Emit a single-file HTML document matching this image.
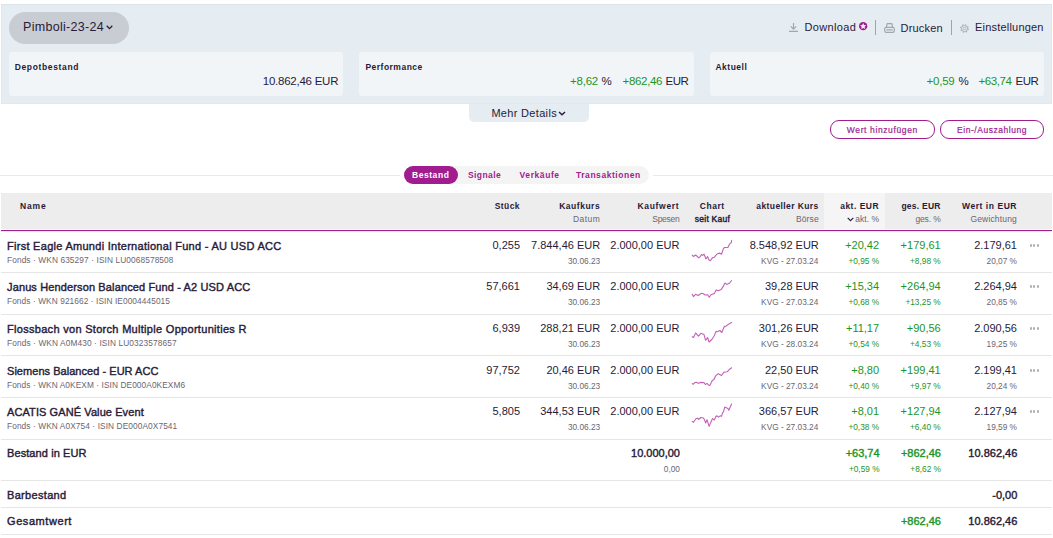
<!DOCTYPE html>
<html lang="de">
<head>
<meta charset="utf-8">
<title>Depot – Pimboli-23-24</title>
<style>
html,body{margin:0;padding:0;background:#fff;}
body{width:1053px;height:538px;position:relative;overflow:hidden;font-family:"Liberation Sans", Arial, sans-serif;color:#281a38;}
.t{position:absolute;white-space:nowrap;line-height:1;}
.m{-webkit-text-stroke:0.4px currentColor;}
.m2{-webkit-text-stroke:0.2px currentColor;}
.abs{position:absolute;}
.topbar{left:1px;top:4px;width:1051px;height:100px;background:#e5ecf2;box-shadow:inset 0 1px 0 #dde4e9,inset 1px 0 0 #e1e8ed,inset -1px 0 0 #e1e8ed,inset 0 -1px 0 #e2e9ee;}
.pill{left:9px;top:12px;width:120px;height:32px;border-radius:16px;background:#c8cdd3;}
.card{top:52px;height:44px;width:334px;background:#f2f5f8;border-radius:3px;}
.more{left:469px;top:104px;width:120px;height:18px;background:#e5ecf2;border-radius:0 0 5px 5px;}
.obtn{top:120px;height:17px;width:103px;border:1px solid #a01c8f;border-radius:9px;background:#fff;}
.hline{left:0;top:175px;width:1053px;height:1px;background:#e9e9e9;}
.tabswrap{left:400px;top:166px;width:253px;height:18px;background:#fff;}
.tabs{left:404px;top:166px;width:245px;height:18px;border-radius:9px;background:#f4f4f4;}
.tabon{left:404px;top:166px;width:54px;height:18px;border-radius:9px;background:#a01c8f;}
.thead{left:1px;top:193px;width:1051px;height:36px;background:#ededed;}
.thsort{left:824px;top:193px;width:61px;height:36px;background:#f5f5f5;}
.thline{left:1px;top:230px;width:1051px;height:1px;background:#a01c8f;box-shadow:0 1px 0 rgba(160,28,143,0.12);}
.sep{position:absolute;left:1px;width:1051px;height:1px;background:#e6e6e6;}
.spark{position:absolute;overflow:visible;}
.spark polyline{fill:none;stroke:#c462ba;stroke-width:1.12;stroke-linejoin:round;stroke-linecap:round;}
.dots{position:absolute;left:1029.8px;width:10px;height:3px;}
.dots i{position:absolute;top:0;width:2.1px;height:2.7px;border-radius:1px;background:#adb0b5;}
.dots i:nth-child(1){left:0}.dots i:nth-child(2){left:3.6px}.dots i:nth-child(3){left:7.2px}
.vsep{top:20px;width:1px;height:15px;background:#9fa3aa;}
.ico{position:absolute;overflow:visible;}
</style>
</head>
<body>
<header>
<div class="abs topbar"></div>
<div class="abs pill"></div>
<svg class="ico" style="left:105.8px;top:25.2px" width="7" height="5" viewBox="0 0 7 5"><path d="M0.7 0.8 L3.5 3.6 L6.3 0.8" fill="none" stroke="#281a38" stroke-width="1.25"/></svg>
<svg class="ico" style="left:788.5px;top:23px" width="9" height="9" viewBox="0 0 9 9"><path d="M4.5 0 V6 M1.8 3.4 L4.5 6.1 L7.2 3.4 M0 8.4 H9" fill="none" stroke="#a3a7ad" stroke-width="1.2"/></svg>
<svg class="ico" style="left:858.9px;top:21.8px" width="8.3" height="8.3" viewBox="0 0 10 10"><circle cx="5" cy="5" r="5" fill="#a01c8f"/><path d="M5.00 1.35 L6.09 3.75 L8.71 4.04 L6.76 5.82 L7.29 8.41 L5.00 7.10 L2.71 8.41 L3.24 5.82 L1.29 4.04 L3.91 3.75 Z" fill="#f1f3f7"/></svg>
<div class="abs vsep" style="left:875px"></div>
<svg class="ico" style="left:884px;top:23px" width="11" height="10" viewBox="0 0 11 10"><path d="M2.4 4.3 L3.1 0.7 H7.9 L8.6 4.3" fill="none" stroke="#a3a7ad" stroke-width="1.2" stroke-linejoin="round"/><rect x="0.7" y="4.3" width="9.6" height="5" rx="1.6" fill="none" stroke="#a3a7ad" stroke-width="1.2"/><path d="M2.3 6.9 H8.7" fill="none" stroke="#a3a7ad" stroke-width="1.2"/></svg>
<div class="abs vsep" style="left:951px"></div>
<svg class="ico" style="left:960px;top:24px" width="9" height="9" viewBox="0 0 9 9"><circle cx="4.5" cy="4.5" r="3.7" fill="none" stroke="#adb1b7" stroke-width="1.3" stroke-dasharray="1.45 1.456"/><circle cx="4.5" cy="4.5" r="3" fill="none" stroke="#adb1b7" stroke-width="1"/><circle cx="4.5" cy="4.5" r="1.2" fill="none" stroke="#adb1b7" stroke-width="0.8"/></svg>
<div class="abs card" style="left:9px"></div>
<div class="abs card" style="left:359px;width:335px"></div>
<div class="abs card" style="left:710px"></div>
<div class="abs more"></div>
<svg class="ico" style="left:558px;top:111px" width="8" height="5" viewBox="0 0 8 5"><path d="M1 0.9 L4 3.8 L7 0.9" fill="none" stroke="#281a38" stroke-width="1.4"/></svg>
<div class="abs obtn" style="left:830px"></div>
<div class="abs obtn" style="left:940px;width:102px"></div>
</header>
<nav>
<div class="abs hline"></div>
<div class="abs tabswrap"></div>
<div class="abs tabs"></div>
<div class="abs tabon"></div>
</nav>
<main>
<div class="abs thead"></div>
<div class="abs thsort"></div>
<div class="abs thline"></div>
<svg class="ico" style="left:846.5px;top:217px" width="7" height="5" viewBox="0 0 7 5"><path d="M0.7 0.8 L3.5 3.6 L6.3 0.8" fill="none" stroke="#281a38" stroke-width="1.1"/></svg>
<div class="sep" style="top:272px"></div><div class="sep" style="top:314px"></div><div class="sep" style="top:355px"></div><div class="sep" style="top:397px"></div><div class="sep" style="top:439px"></div><div class="sep" style="top:480px"></div><div class="sep" style="top:507px"></div><div class="sep" style="top:534px"></div>
<svg class="spark" style="left:685px;top:235px" width="55" height="30" viewBox="0 0 55 30"><polyline points="7.25,20.2 8.4,21.5 10.6,20.0 12,21.2 13.7,22.8 15.1,21.8 16.5,19.5 17.6,20.4 19,19.2 20.1,21.8 20.9,24 22.6,21.5 24,25.1 25.4,25.7 27.3,22.9 29.3,22.3 30.7,20.4 32.6,18.7 34.6,18.1 36.5,19.2 38.5,13.4 39.6,12.5 42.9,12.5 44.6,8.9 46.3,7.8 46.6,5.3"/></svg><svg class="spark" style="left:685px;top:276px" width="55" height="30" viewBox="0 0 55 30"><polyline points="7.25,18.3 8.4,20.6 10.6,18.3 13.1,19.4 16.5,17.3 18.4,17.7 20.1,19 22.6,18.7 24.3,21.3 25.9,18.7 29.3,17.4 31.2,13.9 33.2,14.8 36.3,13.4 37.9,10.9 39.9,7 41.8,8.4 44.6,7 46.6,4.5"/></svg><svg class="spark" style="left:685px;top:318px" width="55" height="30" viewBox="0 0 55 30"><polyline points="7.25,18.7 8.6,19.5 10.6,14.9 13.4,18.1 15.9,15.3 19,16.6 20.6,22.3 22.6,19.5 24.1,24 26.8,21.5 29.3,17.8 31,13.4 32.3,13.7 34.9,12.5 36.8,14.5 39.3,8.4 40.2,8.6 42.4,7 44.6,5.6 46.6,4.5"/></svg><svg class="spark" style="left:685px;top:360px" width="55" height="30" viewBox="0 0 55 30"><polyline points="7.25,23.7 8.4,24.1 9.8,22.6 11.4,22.3 13.7,23.4 15.1,22.4 19,22.6 20.4,24.5 22,23.4 24,25.4 25.1,25.1 26.8,21.2 29.3,19 30.4,16.2 33.2,13.7 36.5,15.5 38.8,12.3 42.4,11.7 44.6,9.2 46.6,7.8"/></svg><svg class="spark" style="left:685px;top:401px" width="55" height="30" viewBox="0 0 55 30"><polyline points="7.25,20.4 8.5,21.3 10.9,17.8 12.5,17.3 13.7,18.3 15.9,16.5 17.8,16.7 19.2,18.1 20.7,22 22,18.7 24.1,25.4 26.5,19.8 27.6,17.6 29.3,19 31,15.3 32.1,14.9 33.5,16.2 35.1,14.8 36.5,15.3 37.6,11.7 38.5,10.9 39.7,6.1 42.9,7.5 43.8,9.2 46.6,3.1"/></svg>
<span class="dots" style="top:244.1px"><i></i><i></i><i></i></span><span class="dots" style="top:285.1px"><i></i><i></i><i></i></span><span class="dots" style="top:327.1px"><i></i><i></i><i></i></span><span class="dots" style="top:369.1px"><i></i><i></i><i></i></span><span class="dots" style="top:410.1px"><i></i><i></i><i></i></span>
</main>
<div id="txt">
<span class="t" style="left:23px;top:21px;font-size:12.5px;letter-spacing:0.3px;">Pimboli-23-24</span>
<span class="t" style="left:804.6px;top:22px;font-size:11px;letter-spacing:0.32px;">Download</span>
<span class="t" style="left:900.6px;top:23px;font-size:11px;letter-spacing:0.18px;">Drucken</span>
<span class="t" style="left:975px;top:22px;font-size:11px;letter-spacing:0.2px;">Einstellungen</span>
<span class="t" style="left:14.7px;top:63px;font-size:8.5px;font-weight:700;letter-spacing:0.65px;">Depotbestand</span>
<span class="t" style="left:365.4px;top:63px;font-size:8.5px;font-weight:700;letter-spacing:0.49px;">Performance</span>
<span class="t" style="left:715.4px;top:63px;font-size:8.5px;font-weight:700;letter-spacing:0.52px;">Aktuell</span>
<span class="t" style="left:262.8px;top:76px;font-size:11.5px;letter-spacing:-0.25px;">10.862,46 EUR</span>
<span class="t" style="left:665.5px;top:76px;font-size:11.5px;letter-spacing:-0.43px;">EUR</span>
<span class="t" style="left:622.6px;top:76px;font-size:11.5px;color:#1c9527;letter-spacing:-0.33px;">+862,46</span>
<span class="t" style="left:570px;top:76px;font-size:11.5px;color:#1c9527;letter-spacing:-0.22px;">+8,62</span>
<span class="t" style="left:601.5px;top:76px;font-size:11.5px;letter-spacing:-0.73px;">%</span>
<span class="t" style="left:1015.5px;top:76px;font-size:11.5px;letter-spacing:-0.43px;">EUR</span>
<span class="t" style="left:978.5px;top:76px;font-size:11.5px;color:#1c9527;letter-spacing:-0.42px;">+63,74</span>
<span class="t" style="left:926.5px;top:76px;font-size:11.5px;color:#1c9527;letter-spacing:-0.22px;">+0,59</span>
<span class="t" style="left:958.5px;top:76px;font-size:11.5px;letter-spacing:-0.73px;">%</span>
<span class="t" style="left:491.4px;top:108px;font-size:11px;letter-spacing:0.32px;">Mehr Details</span>
<span class="t m2" style="left:846.8px;top:126px;font-size:8.5px;color:#a01c8f;letter-spacing:0.62px;">Wert hinzufügen</span>
<span class="t m2" style="left:957px;top:126px;font-size:8.5px;color:#a01c8f;letter-spacing:0.54px;">Ein-/Auszahlung</span>
<span class="t" style="left:412px;top:171px;font-size:8.5px;font-weight:700;color:#ffffff;letter-spacing:0.55px;">Bestand</span>
<span class="t" style="left:468px;top:171px;font-size:8.5px;font-weight:700;color:#a01c8f;letter-spacing:0.4px;">Signale</span>
<span class="t" style="left:519.6px;top:171px;font-size:8.5px;font-weight:700;color:#a01c8f;letter-spacing:0.57px;">Verkäufe</span>
<span class="t" style="left:576px;top:171px;font-size:8.5px;font-weight:700;color:#a01c8f;letter-spacing:0.54px;">Transaktionen</span>
<span class="t" style="left:20px;top:202px;font-size:8.5px;font-weight:700;letter-spacing:0.84px;">Name</span>
<span class="t" style="left:494.7px;top:202px;font-size:8.5px;font-weight:700;letter-spacing:0.43px;">Stück</span>
<span class="t" style="left:559.2px;top:202px;font-size:8.5px;font-weight:700;letter-spacing:0.52px;">Kaufkurs</span>
<span class="t" style="left:573px;top:215px;font-size:8.5px;color:#6a6672;letter-spacing:0.43px;">Datum</span>
<span class="t" style="left:637.4px;top:202px;font-size:8.5px;font-weight:700;letter-spacing:0.7px;">Kaufwert</span>
<span class="t" style="left:652.3px;top:215px;font-size:8.5px;color:#6a6672;letter-spacing:-0.29px;">Spesen</span>
<span class="t" style="left:699.7px;top:202px;font-size:8.5px;font-weight:700;letter-spacing:0.56px;">Chart</span>
<span class="t m" style="left:694.8px;top:215px;font-size:8.5px;letter-spacing:0.24px;">seit Kauf</span>
<span class="t" style="left:756.3px;top:202px;font-size:8.5px;font-weight:700;letter-spacing:0.41px;">aktueller Kurs</span>
<span class="t" style="left:795.9px;top:215px;font-size:8.5px;color:#6a6672;letter-spacing:0.14px;">Börse</span>
<span class="t" style="left:840.2px;top:202px;font-size:8.5px;font-weight:700;letter-spacing:0.49px;">akt. EUR</span>
<span class="t" style="left:855.3px;top:215px;font-size:8.5px;color:#6a6672;letter-spacing:0.03px;">akt. %</span>
<span class="t" style="left:901.4px;top:202px;font-size:8.5px;font-weight:700;letter-spacing:0.25px;">ges. EUR</span>
<span class="t" style="left:915.4px;top:215px;font-size:8.5px;color:#6a6672;letter-spacing:-0.12px;">ges. %</span>
<span class="t" style="left:962px;top:202px;font-size:8.5px;font-weight:700;letter-spacing:0.55px;">Wert in EUR</span>
<span class="t" style="left:970.4px;top:215px;font-size:8.5px;color:#6a6672;letter-spacing:0.17px;">Gewichtung</span>
<span class="t m" style="left:7px;top:241px;font-size:11px;letter-spacing:0.28px;">First Eagle Amundi International Fund - AU USD ACC</span>
<span class="t" style="left:7px;top:256px;font-size:8.3px;color:#6a6672;letter-spacing:0.11px;">Fonds · WKN 635297 · ISIN LU0068578508</span>
<span class="t" style="left:492.47px;top:240px;font-size:11px;">0,255</span>
<span class="t" style="left:531.09px;top:240px;font-size:11px;">7.844,46 EUR</span>
<span class="t" style="left:567.9px;top:257px;font-size:8.3px;color:#6a6672;">30.06.23</span>
<span class="t" style="left:610.29px;top:240px;font-size:11px;">2.000,00 EUR</span>
<span class="t" style="left:749.69px;top:240px;font-size:11px;">8.548,92 EUR</span>
<span class="t" style="left:761.1px;top:257px;font-size:8.3px;color:#6a6672;">KVG - 27.03.24</span>
<span class="t" style="left:845.15px;top:240px;font-size:11px;color:#1c9527;">+20,42</span>
<span class="t" style="left:848.41px;top:257px;font-size:8.3px;color:#1c9527;">+0,95 %</span>
<span class="t" style="left:900.62px;top:240px;font-size:11px;color:#1c9527;">+179,61</span>
<span class="t" style="left:910.01px;top:257px;font-size:8.3px;color:#1c9527;">+8,98 %</span>
<span class="t" style="left:974.17px;top:240px;font-size:11px;">2.179,61</span>
<span class="t" style="left:986.55px;top:257px;font-size:8.3px;color:#6a6672;">20,07 %</span>
<span class="t m" style="left:7px;top:282px;font-size:11px;letter-spacing:0.13px;">Janus Henderson Balanced Fund - A2 USD ACC</span>
<span class="t" style="left:7px;top:297px;font-size:8.3px;color:#6a6672;letter-spacing:0.09px;">Fonds · WKN 921662 · ISIN IE0004445015</span>
<span class="t" style="left:486.34px;top:281px;font-size:11px;">57,661</span>
<span class="t" style="left:546.39px;top:281px;font-size:11px;">34,69 EUR</span>
<span class="t" style="left:567.9px;top:298px;font-size:8.3px;color:#6a6672;">30.06.23</span>
<span class="t" style="left:610.29px;top:281px;font-size:11px;">2.000,00 EUR</span>
<span class="t" style="left:764.99px;top:281px;font-size:11px;">39,28 EUR</span>
<span class="t" style="left:761.1px;top:298px;font-size:8.3px;color:#6a6672;">KVG - 27.03.24</span>
<span class="t" style="left:845.15px;top:281px;font-size:11px;color:#1c9527;">+15,34</span>
<span class="t" style="left:848.41px;top:298px;font-size:8.3px;color:#1c9527;">+0,68 %</span>
<span class="t" style="left:900.62px;top:281px;font-size:11px;color:#1c9527;">+264,94</span>
<span class="t" style="left:905.4px;top:298px;font-size:8.3px;color:#1c9527;">+13,25 %</span>
<span class="t" style="left:974.17px;top:281px;font-size:11px;">2.264,94</span>
<span class="t" style="left:986.55px;top:298px;font-size:8.3px;color:#6a6672;">20,85 %</span>
<span class="t m" style="left:7px;top:324px;font-size:11px;letter-spacing:0.3px;">Flossbach von Storch Multiple Opportunities R</span>
<span class="t" style="left:7px;top:339px;font-size:8.3px;color:#6a6672;letter-spacing:0.12px;">Fonds · WKN A0M430 · ISIN LU0323578657</span>
<span class="t" style="left:492.47px;top:323px;font-size:11px;">6,939</span>
<span class="t" style="left:540.26px;top:323px;font-size:11px;">288,21 EUR</span>
<span class="t" style="left:567.9px;top:340px;font-size:8.3px;color:#6a6672;">30.06.23</span>
<span class="t" style="left:610.29px;top:323px;font-size:11px;">2.000,00 EUR</span>
<span class="t" style="left:758.86px;top:323px;font-size:11px;">301,26 EUR</span>
<span class="t" style="left:761.1px;top:340px;font-size:8.3px;color:#6a6672;">KVG - 28.03.24</span>
<span class="t" style="left:845.96px;top:323px;font-size:11px;color:#1c9527;">+11,17</span>
<span class="t" style="left:848.41px;top:340px;font-size:8.3px;color:#1c9527;">+0,54 %</span>
<span class="t" style="left:906.75px;top:323px;font-size:11px;color:#1c9527;">+90,56</span>
<span class="t" style="left:910.01px;top:340px;font-size:8.3px;color:#1c9527;">+4,53 %</span>
<span class="t" style="left:974.17px;top:323px;font-size:11px;">2.090,56</span>
<span class="t" style="left:986.55px;top:340px;font-size:8.3px;color:#6a6672;">19,25 %</span>
<span class="t m" style="left:7px;top:366px;font-size:11px;letter-spacing:0.04px;">Siemens Balanced - EUR ACC</span>
<span class="t" style="left:7px;top:381px;font-size:8.3px;color:#6a6672;letter-spacing:0.09px;">Fonds · WKN A0KEXM · ISIN DE000A0KEXM6</span>
<span class="t" style="left:486.34px;top:365px;font-size:11px;">97,752</span>
<span class="t" style="left:546.39px;top:365px;font-size:11px;">20,46 EUR</span>
<span class="t" style="left:567.9px;top:382px;font-size:8.3px;color:#6a6672;">30.06.23</span>
<span class="t" style="left:610.29px;top:365px;font-size:11px;">2.000,00 EUR</span>
<span class="t" style="left:764.99px;top:365px;font-size:11px;">22,50 EUR</span>
<span class="t" style="left:761.1px;top:382px;font-size:8.3px;color:#6a6672;">KVG - 27.03.24</span>
<span class="t" style="left:851.26px;top:365px;font-size:11px;color:#1c9527;">+8,80</span>
<span class="t" style="left:848.41px;top:382px;font-size:8.3px;color:#1c9527;">+0,40 %</span>
<span class="t" style="left:900.62px;top:365px;font-size:11px;color:#1c9527;">+199,41</span>
<span class="t" style="left:910.01px;top:382px;font-size:8.3px;color:#1c9527;">+9,97 %</span>
<span class="t" style="left:974.17px;top:365px;font-size:11px;">2.199,41</span>
<span class="t" style="left:986.55px;top:382px;font-size:8.3px;color:#6a6672;">20,24 %</span>
<span class="t m" style="left:7px;top:407px;font-size:11px;letter-spacing:0.09px;">ACATIS GANÉ Value Event</span>
<span class="t" style="left:7px;top:422px;font-size:8.3px;color:#6a6672;letter-spacing:0.1px;">Fonds · WKN A0X754 · ISIN DE000A0X7541</span>
<span class="t" style="left:492.47px;top:406px;font-size:11px;">5,805</span>
<span class="t" style="left:540.26px;top:406px;font-size:11px;">344,53 EUR</span>
<span class="t" style="left:567.9px;top:423px;font-size:8.3px;color:#6a6672;">30.06.23</span>
<span class="t" style="left:610.29px;top:406px;font-size:11px;">2.000,00 EUR</span>
<span class="t" style="left:758.86px;top:406px;font-size:11px;">366,57 EUR</span>
<span class="t" style="left:761.1px;top:423px;font-size:8.3px;color:#6a6672;">KVG - 27.03.24</span>
<span class="t" style="left:851.26px;top:406px;font-size:11px;color:#1c9527;">+8,01</span>
<span class="t" style="left:848.41px;top:423px;font-size:8.3px;color:#1c9527;">+0,38 %</span>
<span class="t" style="left:900.62px;top:406px;font-size:11px;color:#1c9527;">+127,94</span>
<span class="t" style="left:910.01px;top:423px;font-size:8.3px;color:#1c9527;">+6,40 %</span>
<span class="t" style="left:974.17px;top:406px;font-size:11px;">2.127,94</span>
<span class="t" style="left:986.55px;top:423px;font-size:8.3px;color:#6a6672;">19,59 %</span>
<span class="t m" style="left:7px;top:448px;font-size:11px;letter-spacing:0.09px;">Bestand in EUR</span>
<span class="t m" style="left:631.06px;top:448px;font-size:11px;">10.000,00</span>
<span class="t" style="left:663.84px;top:465px;font-size:8.3px;color:#6a6672;">0,00</span>
<span class="t m" style="left:845.65px;top:448px;font-size:11px;color:#1c9527;">+63,74</span>
<span class="t" style="left:848.91px;top:465px;font-size:8.3px;color:#1c9527;">+0,59 %</span>
<span class="t m" style="left:900.92px;top:448px;font-size:11px;color:#1c9527;">+862,46</span>
<span class="t" style="left:910.31px;top:465px;font-size:8.3px;color:#1c9527;">+8,62 %</span>
<span class="t m" style="left:968.36px;top:448px;font-size:11px;">10.862,46</span>
<span class="t m" style="left:7px;top:490px;font-size:11px;letter-spacing:0.32px;">Barbestand</span>
<span class="t m" style="left:992.22px;top:490px;font-size:11px;">-0,00</span>
<span class="t m" style="left:7px;top:516px;font-size:11px;letter-spacing:0.57px;">Gesamtwert</span>
<span class="t m" style="left:900.92px;top:516px;font-size:11px;color:#1c9527;">+862,46</span>
<span class="t m" style="left:968.36px;top:516px;font-size:11px;">10.862,46</span>
</div>
</body>
</html>
